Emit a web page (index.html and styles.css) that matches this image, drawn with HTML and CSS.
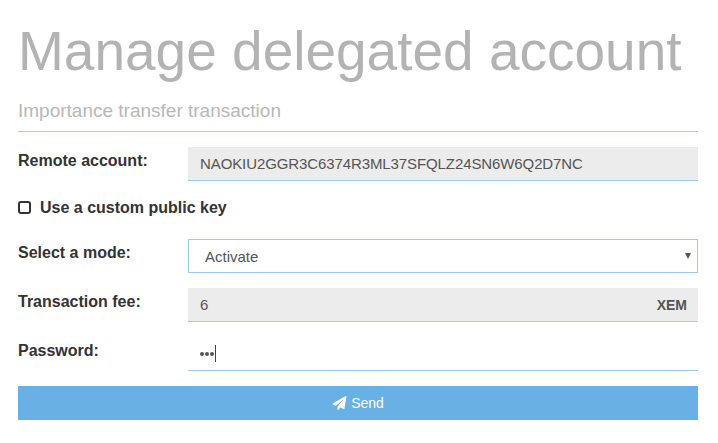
FILE: index.html
```html
<!DOCTYPE html>
<html lang="en">
<head>
<meta charset="utf-8">
<title>Manage delegated account</title>
<link rel="stylesheet" href="styles.css">
</head>
<body>
<main class="page">
  <h1 class="title">Manage delegated account</h1>
  <h2 class="subtitle">Importance transfer transaction</h2>
  <form class="form">
    <div class="row">
      <label class="label">Remote account:</label>
      <div class="field filled address">NAOKIU2GGR3C6374R3ML37SFQLZ24SN6W6Q2D7NC</div>
    </div>
    <div class="check"><span class="box"></span><span>Use a custom public key</span></div>
    <div class="row">
      <label class="label">Select a mode:</label>
      <div class="field select"><span>Activate</span><span class="arrow"></span></div>
    </div>
    <div class="row">
      <label class="label">Transaction fee:</label>
      <div class="field filled fee"><span>6</span><b class="unit">XEM</b></div>
    </div>
    <div class="row">
      <label class="label">Password:</label>
      <div class="field password"><span class="dots"><i></i><i></i><i></i></span><span class="caret"></span></div>
    </div>
    <div class="send">
      <svg class="plane" viewBox="0 0 1792 1792"><path fill="#fff" d="M1764 11q33 24 27 64l-256 1536q-5 29-32 45-14 8-31 8-11 0-24-5l-453-185-242 295q-18 23-49 23-13 0-22-4-19-7-30.500-23.500t-11.500-36.500v-349l864-1059-1069 925-395-162q-37-14-40-55-2-40 32-59l1664-960q15-9 32-9 20 0 36 11z"/></svg>
      <span>Send</span>
    </div>
  </form>
</main>
</body>
</html>
```
FILE: styles.css
```css
* { box-sizing: border-box; }
body { margin: 0; background: #fff; color: #333; font: 15px/20px "Liberation Sans", Arial, sans-serif; }
.page { width: 680px; margin-left: 18px; padding-top: 20px; }
.title { margin: 0; height: 64px; font-weight: 400; font-size: 55px; line-height: 62px; color: #b3b3b3; white-space: nowrap; }
.subtitle { margin: 0; height: 48px; padding-top: 13px; border-bottom: 1px solid #a9cde8; font-weight: 400; font-size: 19px; line-height: 28px; color: #b8b8b8; }
.form { margin: 0; padding-top: 15px; }
.row { display: flex; height: 34px; margin-bottom: 15px; }
.label { width: 170px; padding-top: 4px; font-weight: bold; font-size: 16px; }
.field { flex: 1; display: flex; align-items: center; padding: 0 12px; border-bottom: 1px solid #9fceeb; color: #555; }
.filled { background: #ececec; }
.address { letter-spacing: -0.1px; }
.select { border: 1px solid #9fceeb; padding: 2px 6px 0 16px; justify-content: space-between; }
.arrow { margin-bottom: 2px; border: 3px solid transparent; border-top: 6px solid #555; border-bottom: 0; }
.fee { justify-content: space-between; padding-right: 11px; }
.unit { font-size: 14px; }
.check { display: flex; align-items: center; height: 24px; margin-bottom: 19px; font-size: 16px; font-weight: bold; }
.box { width: 13px; height: 13px; margin: -2px 9px 0 0; border: 2px solid #333; border-radius: 3px; }
.dots { display: flex; gap: 1px; }
.dots i { width: 4px; height: 4px; border-radius: 50%; background: #555; }
.caret { width: 1px; height: 17px; background: #444; margin: -1px 0 0 1px; }
.send { display: flex; align-items: center; justify-content: center; gap: 4px; height: 34px; background: #69b0e5; color: #fff; font-size: 14px; }
.plane { width: 15px; height: 14px; }
```
